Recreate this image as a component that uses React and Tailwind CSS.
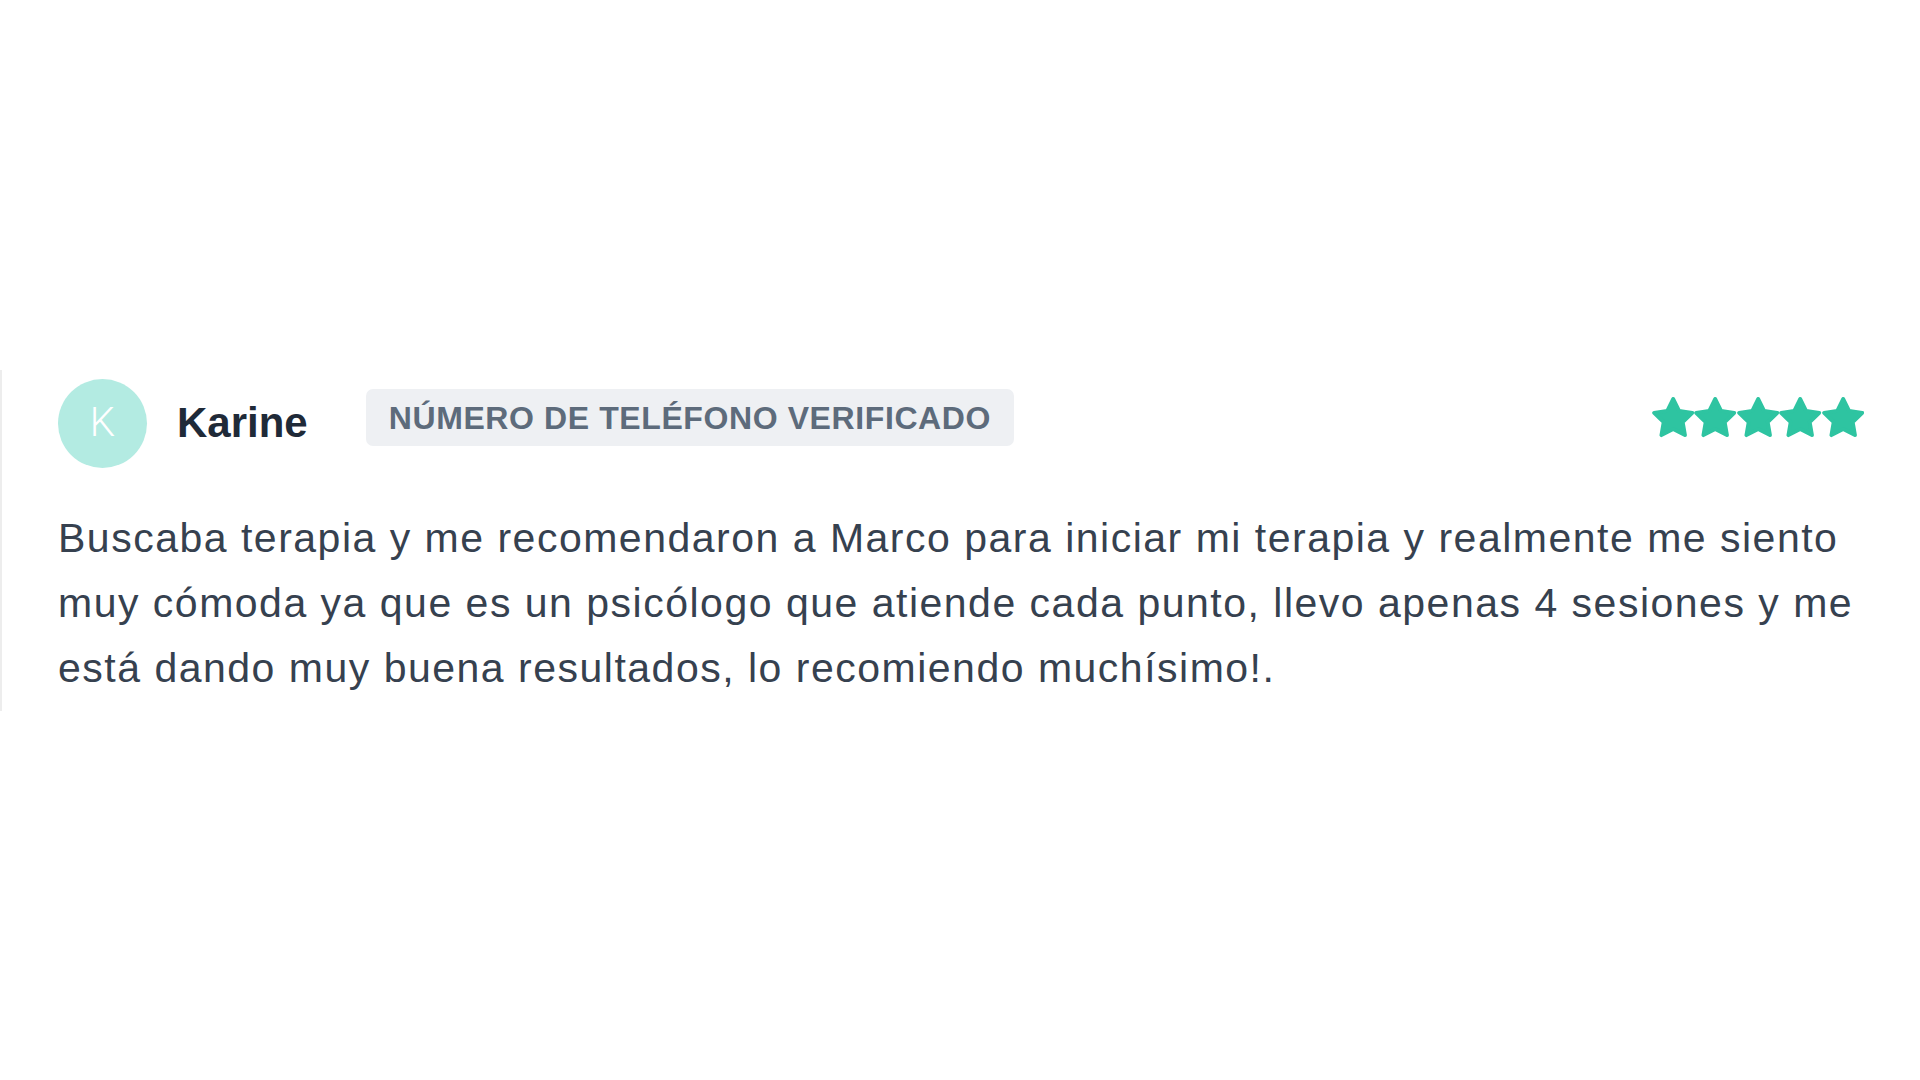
const Star = () => (
  <svg viewBox="1 1 22 21.5" className="w-[42.4px] h-[41px] shrink-0" aria-hidden="true">
    <polygon
      points="12 2 15.09 8.26 22 9.27 17 14.14 18.18 21.02 12 17.77 5.82 21.02 7 14.14 2 9.27 8.91 8.26"
      fill="#2ec4a1"
      stroke="#2ec4a1"
      strokeWidth="2"
      strokeLinejoin="round"
    />
  </svg>
);

export default function App() {
  return (
    <div className="h-screen w-full bg-white flex items-center font-['Liberation_Sans',Arial,sans-serif]">
      <div className="w-full border-l-2 border-[#ededed] pl-[56px] pr-[56px] pt-[9px] pb-[10px]">
        {/* header: avatar, name, badge, rating */}
        <div className="flex items-center">
          <div className="w-[89px] h-[89px] rounded-full bg-[#b3ebe2] flex items-center justify-center shrink-0">
            <span className="text-white text-[40px] leading-none font-light font-['Roboto',sans-serif]">K</span>
          </div>
          <span className="ml-[30px] text-[42px] leading-none font-bold text-[#1f2a38]">Karine</span>
          <span className="ml-[58px] mb-[11px] h-[57px] px-[23px] flex items-center rounded-[7px] bg-[#eef0f3] text-[32px] font-bold tracking-[0.6px] text-[#5d6b7b] uppercase leading-none">
            Número de teléfono verificado
          </span>
          <div className="ml-auto mb-[12px] flex">
            <Star />
            <Star />
            <Star />
            <Star />
            <Star />
          </div>
        </div>
        <p className="mt-[38px] text-[41px] leading-[65px] tracking-[1.5px] whitespace-nowrap text-[#36414f]">
          Buscaba terapia y me recomendaron a Marco para iniciar mi terapia y realmente me siento
          <br />
          muy cómoda ya que es un psicólogo que atiende cada punto, llevo apenas 4 sesiones y me
          <br />
          está dando muy buena resultados, lo recomiendo muchísimo!.
        </p>
      </div>
    </div>
  );
}
